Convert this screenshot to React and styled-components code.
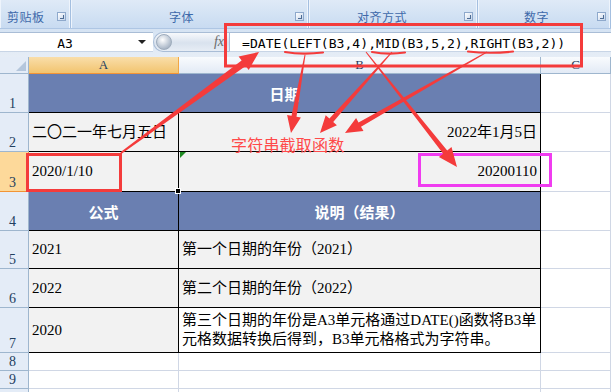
import React from "react";
import styled, { createGlobalStyle } from "styled-components";

const GlobalStyle = createGlobalStyle`
  html, body {
    margin: 0;
    padding: 0;
    background: #fff;
    overflow: hidden;
  }
`;

const Page = styled.div`
  position: relative;
  width: 611px;
  height: 392px;
  overflow: hidden;
  background: #fff;
  font-family: "Liberation Serif", "Noto Sans CJK SC", serif;
`;

/* ---------- ribbon ---------- */

const Ribbon = styled.div`
  display: flex;
  height: 29px;
  box-sizing: border-box;
  background: linear-gradient(#dfeaf7, #c8dbf1);
  border-bottom: 1px solid #aec6e4;
`;

const Group = styled.div`
  position: relative;
  flex: none;
  width: ${(p) => p.$w}px;
  box-sizing: border-box;
  display: flex;
  align-items: flex-end;
  padding: 0 0 3px ${(p) => p.$pad}px;
  border-right: 1px solid #a4bfe0;
  box-shadow: inset -1px 0 0 #eef4fc, inset 1px 0 0 #eef4fc;
  font: 12px/17px "Noto Sans CJK SC", sans-serif;
  color: #3e69aa;
  letter-spacing: 0.5px;
`;

const Launcher = styled.span`
  position: absolute;
  right: 4px;
  bottom: 7px;
  width: 7px;
  height: 7px;
  border: 1px solid #8ea9cc;
  background: linear-gradient(135deg, #ffffff, #c4d4ea);
  &::after {
    content: "";
    position: absolute;
    right: 1px;
    bottom: 1px;
    width: 3px;
    height: 3px;
    border-right: 1px solid #4d6c94;
    border-bottom: 1px solid #4d6c94;
  }
`;

/* ---------- formula bar ---------- */

const FormulaBar = styled.div`
  display: flex;
  height: 28px;
  box-sizing: border-box;
  padding: 3px 0 5px;
  background: linear-gradient(#d5e3f3, #e6edf6);
`;

const NameBox = styled.div`
  flex: none;
  width: 153px;
  display: flex;
  align-items: center;
  background: #fff;
  border-top: 1px solid #a9bdd6;
  border-bottom: 1px solid #c8d5e6;
`;

const NameText = styled.span`
  width: 130px;
  text-align: center;
  font: 13px "DejaVu Sans Mono", monospace;
  color: #000;
  padding-top: 2px;
`;

const Caret = styled.span`
  width: 0;
  height: 0;
  margin-left: 8px;
  border-left: 4px solid transparent;
  border-right: 4px solid transparent;
  border-top: 4px solid #222;
`;

const Knob = styled.div`
  flex: none;
  width: 76px;
  display: flex;
  align-items: center;
  justify-content: space-between;
  padding: 0 5px 0 2px;
  box-sizing: border-box;
  border-radius: 11px 0 0 11px;
  border: 1px solid #a9bdd6;
  border-right: none;
  background: linear-gradient(#f7f9fc, #d9e2ee 55%, #e7edf5);
`;

const Ball = styled.span`
  width: 14px;
  height: 14px;
  border-radius: 50%;
  background: radial-gradient(circle at 40% 35%, #ffffff, #b8c3d1 60%, #8f9cad);
  border: 1px solid #9eacbd;
`;

const Fx = styled.span`
  font: italic 14px "Liberation Serif", serif;
  color: #6b6b6b;
`;

const FormulaInput = styled.div`
  flex: 1;
  display: flex;
  align-items: center;
  padding: 2px 0 0 12px;
  background: #fff;
  border-top: 1px solid #a9bdd6;
  border-bottom: 1px solid #c8d5e6;
  border-left: 1px solid #a9bdd6;
  font: 13.1px "DejaVu Sans Mono", monospace;
  color: #000;
  white-space: nowrap;
`;

/* ---------- sheet ---------- */

const Sheet = styled.div`
  display: grid;
  grid-template-columns: 29px 150px 362px 70px;
  grid-template-rows: 17px 39px 39px 40px 39px 38px 39px 45px 18px 18px 18px;
`;

const Corner = styled.div`
  position: relative;
  background: #e4ecf7;
  border-right: 1px solid #9eb6ce;
  border-bottom: 1px solid #9eb6ce;
  &::after {
    content: "";
    position: absolute;
    right: 2px;
    bottom: 2px;
    border-left: 10px solid transparent;
    border-bottom: 10px solid #b4c6dc;
  }
`;

const ColHead = styled.div`
  box-sizing: border-box;
  display: flex;
  align-items: center;
  justify-content: center;
  font: 13px "Liberation Serif", serif;
  color: #23405f;
  background: ${(p) =>
    p.$active
      ? "linear-gradient(#f9deaa, #f2c46f)"
      : "linear-gradient(#f9fbfd, #e2eaf5)"};
  border-right: 1px solid ${(p) => (p.$active ? "#f1a745" : "#9eb6ce")};
  border-bottom: 1px solid ${(p) => (p.$active ? "#f29436" : "#9eb6ce")};
`;

const RowHead = styled.div`
  box-sizing: border-box;
  display: flex;
  align-items: flex-end;
  justify-content: center;
  padding: 0 3px 1px 0;
  font: 14px/14px "Liberation Serif", serif;
  color: #23405f;
  background: ${(p) => (p.$active ? "#fdd99a" : "#e4ecf7")};
  border-right: 1px solid ${(p) => (p.$active ? "#f29436" : "#9eb6ce")};
  border-bottom: 1px solid ${(p) => (p.$active ? "#f29436" : "#9eb6ce")};
`;

const Cell = styled.div`
  position: relative;
  box-sizing: border-box;
  display: flex;
  align-items: center;
  justify-content: ${(p) =>
    p.$align === "right" ? "flex-end" : p.$align === "center" ? "center" : "flex-start"};
  padding: 0 3px;
  grid-column: ${(p) => (p.$span ? `span ${p.$span}` : "auto")};
  background: ${(p) => (p.$head ? "#6a7fb1" : p.$bg || "#fff")};
  border-right: 1px solid ${(p) => (p.$table ? "#000" : "#d0d7e5")};
  border-bottom: 1px solid ${(p) => (p.$table ? "#000" : "#d0d7e5")};
  color: ${(p) => (p.$head ? "#fff" : "#000")};
  font-family: ${(p) =>
    p.$head ? '"Noto Sans CJK SC", sans-serif' : '"Liberation Serif", "Noto Sans CJK SC", serif'};
  font-weight: ${(p) => (p.$head ? 700 : 400)};
  font-size: 15px;
  line-height: 19px;
  white-space: nowrap;
  overflow: ${(p) => (p.$selected ? "visible" : "hidden")};
`;

const ErrorMark = styled.span`
  position: absolute;
  left: 1px;
  top: 0;
  border-top: 6px solid #1f8a22;
  border-right: 6px solid transparent;
`;

const FillHandle = styled.span`
  position: absolute;
  right: -3px;
  bottom: -3px;
  width: 4px;
  height: 4px;
  background: #000;
  border: 1px solid #fff;
  z-index: 2;
`;

/* ---------- annotations ---------- */

const Overlay = styled.svg`
  position: absolute;
  left: 0;
  top: 0;
  pointer-events: none;
`;

const Callout = styled.div`
  position: absolute;
  left: 231px;
  top: 134px;
  font: 16px/20px "Noto Sans CJK SC", sans-serif;
  color: #ff4a4a;
  letter-spacing: 0.2px;
  white-space: nowrap;
`;

const RED = "#f43b3b";

const arrow = (x1, y1, x2, y2, w0, w1, hl, hw) => {
  const dx = x2 - x1;
  const dy = y2 - y1;
  const len = Math.hypot(dx, dy);
  const ux = dx / len;
  const uy = dy / len;
  const nx = -uy;
  const ny = ux;
  const bx = x2 - ux * hl;
  const by = y2 - uy * hl;
  const pt = (x, y) => `${x.toFixed(1)},${y.toFixed(1)}`;
  return [
    pt(x1 + (nx * w0) / 2, y1 + (ny * w0) / 2),
    pt(bx + (nx * w1) / 2, by + (ny * w1) / 2),
    pt(bx + (nx * hw) / 2, by + (ny * hw) / 2),
    pt(x2, y2),
    pt(bx - (nx * hw) / 2, by - (ny * hw) / 2),
    pt(bx - (nx * w1) / 2, by - (ny * w1) / 2),
    pt(x1 - (nx * w0) / 2, y1 - (ny * w0) / 2),
  ].join(" ");
};

const arrows = [
  [121, 153, 259, 52, 2, 7, 19, 17],
  [305, 55, 291, 133, 1, 5, 17, 14],
  [392, 52, 320, 133, 1, 5, 17, 15],
  [487, 52, 345, 133, 1, 5, 17, 15],
  [366, 52, 457, 167, 1, 5, 19, 16],
];

const groups = [
  { w: 71, pad: 7, label: "剪贴板" },
  { w: 238, pad: 98, label: "字体" },
  { w: 169, pad: 48, label: "对齐方式" },
  { w: 133, pad: 46, label: "数字" },
];

const rows = [
  { n: 1, cells: [{ span: 2, head: true, align: "center", text: "日期" }] },
  {
    n: 2,
    cells: [
      { bg: "#f2f2f2", text: "二〇二一年七月五日" },
      { bg: "#f2f2f2", align: "right", text: "2022年1月5日" },
    ],
  },
  {
    n: 3,
    active: true,
    cells: [
      { bg: "#f2f2f2", text: "2020/1/10", selected: true },
      { bg: "#f2f2f2", align: "right", text: "20200110", error: true },
    ],
  },
  {
    n: 4,
    cells: [
      { head: true, align: "center", text: "公式" },
      { head: true, align: "center", text: "说明（结果）" },
    ],
  },
  {
    n: 5,
    cells: [
      { bg: "#f2f2f2", text: "2021" },
      { bg: "#f2f2f2", text: "第一个日期的年份（2021）" },
    ],
  },
  {
    n: 6,
    cells: [
      { bg: "#f2f2f2", text: "2022" },
      { bg: "#f2f2f2", text: "第二个日期的年份（2022）" },
    ],
  },
  {
    n: 7,
    cells: [
      { bg: "#f2f2f2", text: "2020" },
      {
        bg: "#fff",
        lines: [
          "第三个日期的年份是A3单元格通过DATE()函数将B3单",
          "元格数据转换后得到，B3单元格格式为字符串。",
        ],
      },
    ],
  },
];

const App = () => {
  return (
    <Page>
      <GlobalStyle />
      <Ribbon>
        {groups.map((g) => (
          <Group key={g.label} $w={g.w} $pad={g.pad}>
            {g.label}
            <Launcher />
          </Group>
        ))}
      </Ribbon>

      <FormulaBar>
        <NameBox>
          <NameText>A3</NameText>
          <Caret />
        </NameBox>
        <Knob>
          <Ball />
          <Fx>fx</Fx>
        </Knob>
        <FormulaInput>=DATE(LEFT(B3,4),MID(B3,5,2),RIGHT(B3,2))</FormulaInput>
      </FormulaBar>

      <Sheet>
        <Corner />
        <ColHead $active>A</ColHead>
        <ColHead>B</ColHead>
        <ColHead>C</ColHead>

        {rows.map((r) => (
          <React.Fragment key={r.n}>
            <RowHead $active={r.active}>{r.n}</RowHead>
            {r.cells.map((c, i) => (
              <Cell
                key={i}
                $table
                $span={c.span}
                $head={c.head}
                $bg={c.bg}
                $align={c.align}
                $selected={c.selected}
              >
                {c.lines ? (
                  <div>
                    {c.lines.map((l) => (
                      <div key={l}>{l}</div>
                    ))}
                  </div>
                ) : (
                  c.text
                )}
                {c.error && <ErrorMark />}
                {c.selected && <FillHandle />}
              </Cell>
            ))}
            <Cell />
          </React.Fragment>
        ))}

        {[8, 9].map((n) => (
          <React.Fragment key={n}>
            <RowHead>{n}</RowHead>
            <Cell />
            <Cell />
            <Cell />
          </React.Fragment>
        ))}
        <RowHead />
        <Cell />
        <Cell />
        <Cell />
      </Sheet>

      <Callout>字符串截取函数</Callout>

      <Overlay width="611" height="392" viewBox="0 0 611 392">
        <rect x="225.5" y="24.5" width="356" height="41.5" fill="none" stroke={RED} strokeWidth="3" />
        <rect x="27.5" y="154.5" width="93" height="36" fill="none" stroke={RED} strokeWidth="3" />
        <rect x="419.5" y="154.5" width="131" height="31" fill="none" stroke="#f03cf0" strokeWidth="3" />
        <path d="M285 52 Q302 55 323 52.5" fill="none" stroke={RED} strokeWidth="2.2" strokeLinecap="round" />
        <path d="M372 52 Q388 55 405 52.5" fill="none" stroke={RED} strokeWidth="2.2" strokeLinecap="round" />
        <path d="M468 51.5 Q490 54 513 51.5" fill="none" stroke={RED} strokeWidth="2.2" strokeLinecap="round" />
        {arrows.map((a, i) => (
          <polygon key={i} points={arrow(...a)} fill={RED} />
        ))}
      </Overlay>
    </Page>
  );
};

export default App;
